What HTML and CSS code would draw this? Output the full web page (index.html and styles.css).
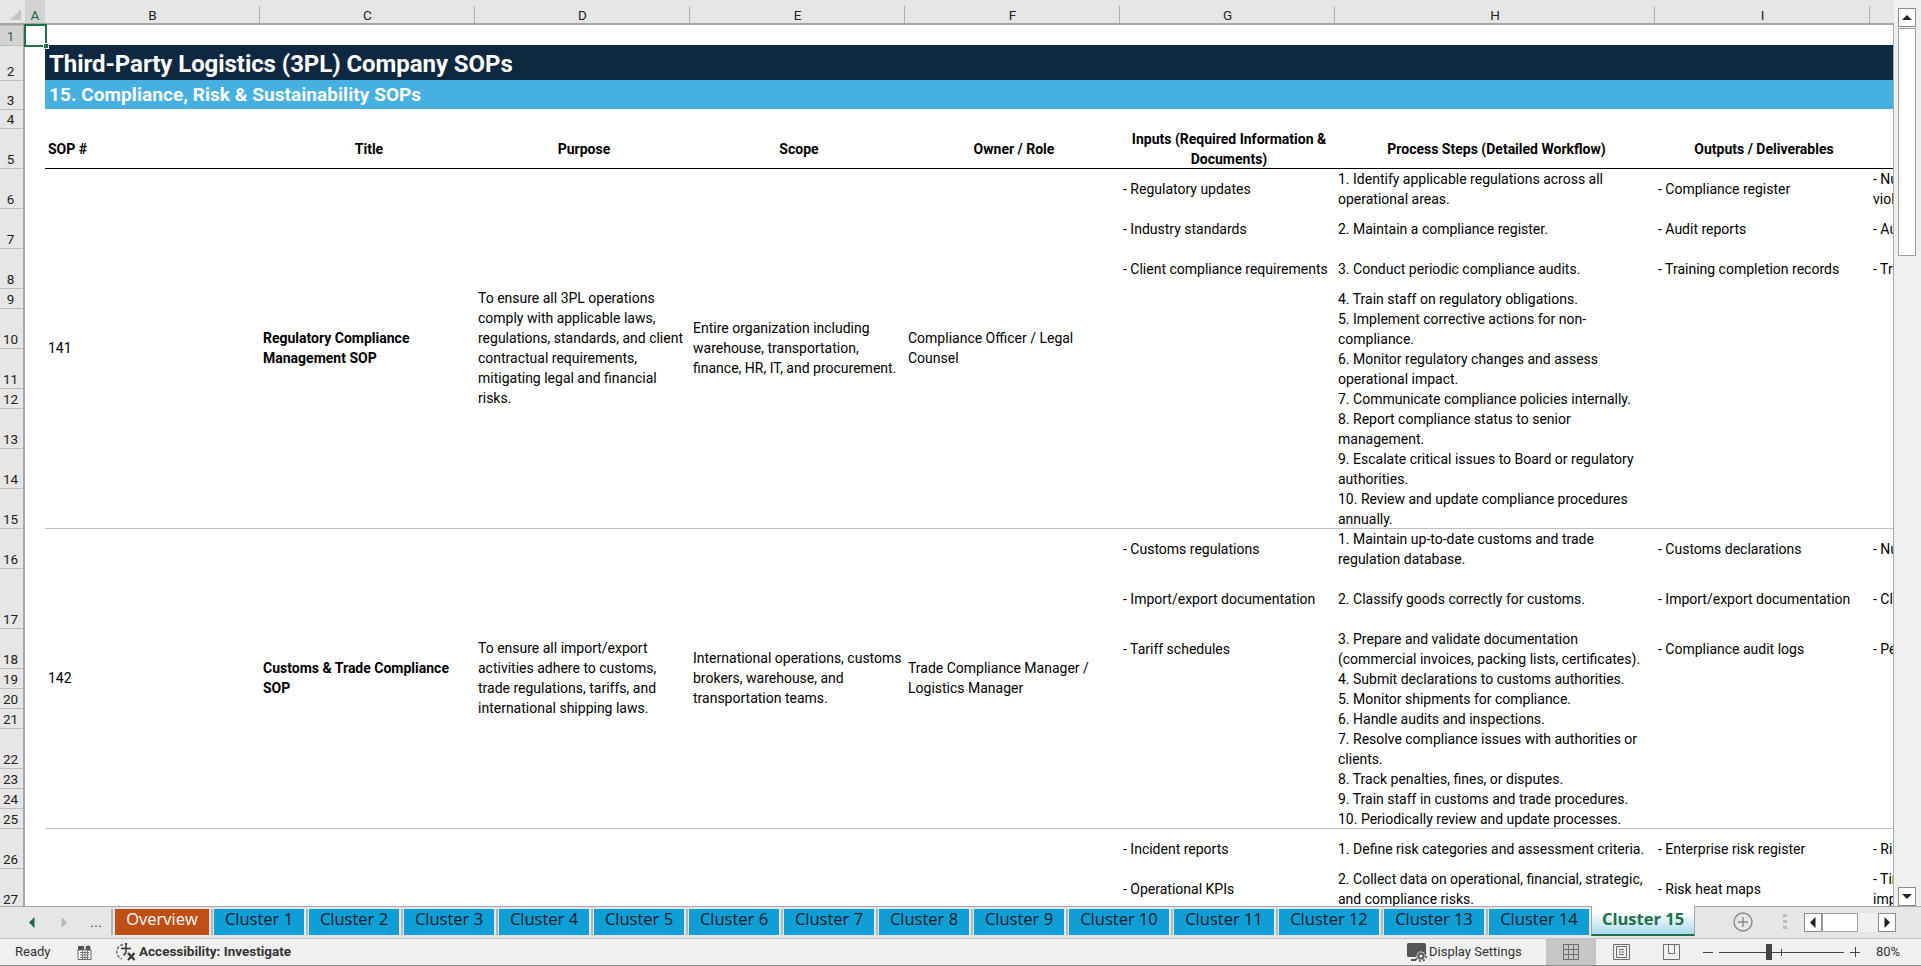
FILE: index.html
```html
<!DOCTYPE html>
<html lang="en">
<head>
<meta charset="utf-8">
<title>Third-Party Logistics (3PL) Company SOPs</title>
<link rel="stylesheet" href="styles.css">
</head>
<body>
<div class="window">
  <div class="sheet-area">
    <div class="grid-wrap">
      <table class="grid">
        <colgroup>
          <col class="c-rh"><col class="c-a"><col class="c-std"><col class="c-std"><col class="c-std"><col class="c-std"><col class="c-std"><col class="c-std"><col class="c-h"><col class="c-std"><col class="c-std">
        </colgroup>
        <thead>
          <tr class="r25">
            <th class="corner"><svg class="corner-tri" width="13" height="13" viewBox="0 0 13 13"><path d="M12 1V12H1Z" fill="#c4c4c4"/></svg></th>
            <th class="ch ch-on">A</th><th class="ch">B</th><th class="ch">C</th><th class="ch">D</th><th class="ch">E</th><th class="ch">F</th><th class="ch">G</th><th class="ch">H</th><th class="ch">I</th><th class="ch"></th>
          </tr>
        </thead>
        <tbody>
          <tr class="r20"><th class="rh rh-on">1</th><td class="a1"><span class="sel"><i class="sel-handle"></i></span></td><td colspan="9"></td></tr>
          <tr class="r35"><th class="rh">2</th><td></td><td colspan="9" class="title">Third-Party Logistics (3PL) Company SOPs</td></tr>
          <tr class="r29"><th class="rh">3</th><td></td><td colspan="9" class="subtitle">15. Compliance, Risk &amp; Sustainability SOPs</td></tr>
          <tr class="r19"><th class="rh">4</th><td></td><td colspan="9"></td></tr>
        </tbody>
        <tbody class="data">
          <tr class="r40 head"><th class="rh">5</th><td></td>
            <td class="hl">SOP #</td><td>Title</td><td>Purpose</td><td>Scope</td><td>Owner / Role</td><td>Inputs (Required Information &amp;<br>Documents)</td><td>Process Steps (Detailed Workflow)</td><td>Outputs / Deliverables</td><td></td>
          </tr>

          <tr class="r40 line-black"><th class="rh">6</th><td></td>
            <td rowspan="10">141</td>
            <td rowspan="10" class="b">Regulatory Compliance<br>Management SOP</td>
            <td rowspan="10">To ensure all 3PL operations<br>comply with applicable laws,<br>regulations, standards, and client<br>contractual requirements,<br>mitigating legal and financial<br>risks.</td>
            <td rowspan="10">Entire organization including<br>warehouse, transportation,<br>finance, HR, IT, and procurement.</td>
            <td rowspan="10">Compliance Officer / Legal<br>Counsel</td>
            <td>- Regulatory updates</td>
            <td>1. Identify applicable regulations across all<br>operational areas.</td>
            <td>- Compliance register</td>
            <td>- Number of compliance<br>violations</td>
          </tr>
          <tr class="r40"><th class="rh">7</th><td></td><td>- Industry standards</td><td>2. Maintain a compliance register.</td><td>- Audit reports</td><td>- Audit findings</td></tr>
          <tr class="r40"><th class="rh">8</th><td></td><td>- Client compliance requirements</td><td>3. Conduct periodic compliance audits.</td><td>- Training completion records</td><td>- Training completion</td></tr>
          <tr class="r20"><th class="rh">9</th><td></td><td></td><td>4. Train staff on regulatory obligations.</td><td></td><td></td></tr>
          <tr class="r40"><th class="rh">10</th><td></td><td></td><td>5. Implement corrective actions for non-<br>compliance.</td><td></td><td></td></tr>
          <tr class="r40"><th class="rh">11</th><td></td><td></td><td>6. Monitor regulatory changes and assess<br>operational impact.</td><td></td><td></td></tr>
          <tr class="r20"><th class="rh">12</th><td></td><td></td><td>7. Communicate compliance policies internally.</td><td></td><td></td></tr>
          <tr class="r40"><th class="rh">13</th><td></td><td></td><td>8. Report compliance status to senior<br>management.</td><td></td><td></td></tr>
          <tr class="r40"><th class="rh">14</th><td></td><td></td><td>9. Escalate critical issues to Board or regulatory<br>authorities.</td><td></td><td></td></tr>
          <tr class="r40"><th class="rh">15</th><td></td><td></td><td>10. Review and update compliance procedures<br>annually.</td><td></td><td></td></tr>

          <tr class="r40 line-grey"><th class="rh">16</th><td></td>
            <td rowspan="10">142</td>
            <td rowspan="10" class="b">Customs &amp; Trade Compliance<br>SOP</td>
            <td rowspan="10">To ensure all import/export<br>activities adhere to customs,<br>trade regulations, tariffs, and<br>international shipping laws.</td>
            <td rowspan="10">International operations, customs<br>brokers, warehouse, and<br>transportation teams.</td>
            <td rowspan="10">Trade Compliance Manager /<br>Logistics Manager</td>
            <td>- Customs regulations</td>
            <td>1. Maintain up-to-date customs and trade<br>regulation database.</td>
            <td>- Customs declarations</td>
            <td>- Number of declarations</td>
          </tr>
          <tr class="r60"><th class="rh">17</th><td></td><td>- Import/export documentation</td><td>2. Classify goods correctly for customs.</td><td>- Import/export documentation</td><td>- Clearance time</td></tr>
          <tr class="r40"><th class="rh">18</th><td></td><td>- Tariff schedules</td><td>3. Prepare and validate documentation<br>(commercial invoices, packing lists, certificates).</td><td>- Compliance audit logs</td><td>- Penalties incurred</td></tr>
          <tr class="r20"><th class="rh">19</th><td></td><td></td><td>4. Submit declarations to customs authorities.</td><td></td><td></td></tr>
          <tr class="r20"><th class="rh">20</th><td></td><td></td><td>5. Monitor shipments for compliance.</td><td></td><td></td></tr>
          <tr class="r20"><th class="rh">21</th><td></td><td></td><td>6. Handle audits and inspections.</td><td></td><td></td></tr>
          <tr class="r40"><th class="rh">22</th><td></td><td></td><td>7. Resolve compliance issues with authorities or<br>clients.</td><td></td><td></td></tr>
          <tr class="r20"><th class="rh">23</th><td></td><td></td><td>8. Track penalties, fines, or disputes.</td><td></td><td></td></tr>
          <tr class="r20"><th class="rh">24</th><td></td><td></td><td>9. Train staff in customs and trade procedures.</td><td></td><td></td></tr>
          <tr class="r20"><th class="rh">25</th><td></td><td></td><td>10. Periodically review and update processes.</td><td></td><td></td></tr>

          <tr class="r40 line-grey"><th class="rh">26</th><td></td>
            <td rowspan="2"></td><td rowspan="2"></td><td rowspan="2"></td><td rowspan="2"></td><td rowspan="2"></td>
            <td>- Incident reports</td><td>1. Define risk categories and assessment criteria.</td><td>- Enterprise risk register</td><td>- Risk exposure</td>
          </tr>
          <tr class="r40"><th class="rh">27</th><td></td><td>- Operational KPIs</td><td>2. Collect data on operational, financial, strategic,<br>and compliance risks.</td><td>- Risk heat maps</td><td>- Time to mitigate<br>impact</td></tr>
        </tbody>
      </table>
    </div>
    <div class="vscroll">
      <div class="vbtn"><svg width="12" height="7" viewBox="0 0 12 7"><path d="M6 1 11 6H1Z" fill="#222"/></svg></div>
      <div class="vthumb"></div>
      <div class="vtrack"></div>
      <div class="vbtn"><svg width="12" height="7" viewBox="0 0 12 7"><path d="M6 6 11 1H1Z" fill="#222"/></svg></div>
    </div>
  </div>

  <div class="tabbar">
    <div class="tabnav">
      <svg class="nav-l" width="6" height="11" viewBox="0 0 6 11"><path d="M5.5 0V11L0 5.5Z" fill="#1f6b3f"/></svg>
      <svg class="nav-r" width="6" height="11" viewBox="0 0 6 11"><path d="M.5 0V11L6 5.5Z" fill="#b9b9b9"/></svg>
      <span class="nav-dots">...</span>
    </div>
    <div class="tabs">
      <span class="tab tab-orange">Overview</span>
      <span class="tab">Cluster 1</span>
      <span class="tab">Cluster 2</span>
      <span class="tab">Cluster 3</span>
      <span class="tab">Cluster 4</span>
      <span class="tab">Cluster 5</span>
      <span class="tab">Cluster 6</span>
      <span class="tab">Cluster 7</span>
      <span class="tab">Cluster 8</span>
      <span class="tab">Cluster 9</span>
      <span class="tab tab-wide">Cluster 10</span>
      <span class="tab tab-wide">Cluster 11</span>
      <span class="tab tab-wide">Cluster 12</span>
      <span class="tab tab-wide">Cluster 13</span>
      <span class="tab tab-wide tab-last">Cluster 14</span>
      <span class="tab-active">Cluster 15</span>
    </div>
    <div class="tab-tools">
      <svg class="add" width="20" height="20" viewBox="0 0 20 20"><circle cx="10" cy="10" r="9" fill="none" stroke="#8a8a8a" stroke-width="1.4"/><path d="M10 5v10M5 10h10" stroke="#8a8a8a" stroke-width="1.4"/></svg>
      <svg class="vdots" width="4" height="16" viewBox="0 0 4 16"><path d="M0 0h4v3H0zM0 6h4v3H0zM0 12h4v3H0z" fill="#bdbdbd"/></svg>
      <div class="hscroll">
        <div class="hbtn"><svg width="6" height="11" viewBox="0 0 6 11"><path d="M5.5 0V11L0 5.5Z" fill="#222"/></svg></div>
        <div class="hthumb"></div>
        <div class="htrack"></div>
        <div class="hbtn"><svg width="6" height="11" viewBox="0 0 6 11"><path d="M.5 0V11L6 5.5Z" fill="#222"/></svg></div>
      </div>
    </div>
  </div>

  <div class="statusbar">
    <span class="ready">Ready</span>
    <svg class="st-macro" width="15" height="15" viewBox="0 0 15 15"><path d="M1 5h13v9.500H1z" fill="#fff" stroke="#666"/><path d="M1 1h6v4H1z" fill="#555"/><circle cx="11" cy="3" r="2.500" fill="#555"/><path d="M3 7.500h9M3 10h9M3 12.500h9M5.500 6v8M8 6v8M10.500 6v8" stroke="#777" stroke-width="1"/></svg>
    <svg class="st-acc" width="20" height="20" viewBox="0 0 20 20"><path d="M7 2.500A7.500 7.500 0 0 0 6 17" fill="none" stroke="#666" stroke-width="1.400" stroke-dasharray="3 1.500"/><path d="M10 1v2.500" stroke="#333" stroke-width="2"/><path d="M5 6.500h10M10 4v6.500M10 10.500l-2.500 3" stroke="#333" stroke-width="1.500" fill="none"/><path d="M12 11l6.500 7M18.500 11l-6.500 7" stroke="#333" stroke-width="2.200"/></svg>
    <span class="acc-text">Accessibility: Investigate</span>
    <div class="st-right">
      <svg class="st-disp" width="20" height="20" viewBox="0 0 20 20"><rect x="0" y="1" width="19" height="14" rx="1.500" fill="#555"/><path d="M4 17h5v2H4z" fill="#555"/><circle cx="14" cy="14" r="4.200" fill="#555" stroke="#f0f0f0" stroke-width="1"/><circle cx="14" cy="14" r="5.200" fill="none" stroke="#555" stroke-width="1.600" stroke-dasharray="2 2"/><circle cx="14" cy="14" r="1.600" fill="#f0f0f0"/></svg>
      <span class="disp-text">Display Settings</span>
      <div class="view view-on"><svg width="16" height="16" viewBox="0 0 16 16"><path d="M.5.500h15v15H.500zM5.500.500v15M10.500.500v15M.5 5.500h15M.5 10.500h15" fill="none" stroke="#6e6e6e"/></svg></div>
      <div class="view"><svg width="17" height="16" viewBox="0 0 17 16"><path d="M.5.500h16v15H.500z" fill="none" stroke="#6e6e6e"/><path d="M3.500 2.500h10v11h-10zM6 5.500h5M6 8h5M6 10.500h5" fill="none" stroke="#6e6e6e"/></svg></div>
      <div class="view"><svg width="17" height="16" viewBox="0 0 17 16"><path d="M.5.500h16v15H.500zM5.500.500v9h6v-9" fill="none" stroke="#6e6e6e"/></svg></div>
      <div class="zoom">
        <span class="z-minus"></span>
        <div class="z-slider"><i class="z-tick"></i><i class="z-thumb"></i></div>
        <span class="z-plus"></span>
      </div>
      <span class="z-pct">80%</span>
    </div>
  </div>
</div>
</body>
</html>
```

FILE: styles.css
```css
* { box-sizing: border-box; }
html, body { margin: 0; padding: 0; height: 100%; overflow: hidden; background: #fff; }
body { font-family: Roboto, "Liberation Sans", sans-serif; color: #000; }

.window { width: 1921px; height: 966px; display: flex; flex-direction: column; overflow: hidden; }

/* ---------- sheet ---------- */
.sheet-area { display: flex; height: 906px; flex: none; }
.grid-wrap { position: relative; width: 1894px; height: 906px; overflow: hidden; flex: none; }
.grid-wrap::after { content: ""; position: absolute; right: 0; top: 25px; bottom: 0; width: 1px; background: #a8a8a8; }
.grid { border-collapse: separate; border-spacing: 0; table-layout: fixed; width: 2085px; font-size: 14px; line-height: 20px; }
.c-rh { width: 25px; }
.c-a { width: 20px; }
.c-std { width: 215px; }
.c-h { width: 320px; }

.r19 { height: 19px; } .r20 { height: 20px; } .r25 { height: 25px; } .r29 { height: 29px; }
.r35 { height: 35px; } .r40 { height: 40px; } .r60 { height: 60px; }

.grid td { padding: 0 0 0 3px; vertical-align: middle; white-space: nowrap; overflow: hidden; }
.data td:not([rowspan]):not(:first-of-type) { transform: translateY(1px); }

.corner { background: #e6e6e6; padding: 0; position: relative; box-shadow: inset 0 -2px 0 #a6a6a6; }
.corner-tri { position: absolute; right: 3px; bottom: 4px; }
.ch {
  background: #e6e6e6 linear-gradient(#b0b0b0, #b0b0b0) no-repeat right 6px / 1px 19px;
  padding: 6px 0 0; font-weight: 400; font-size: 13.500px; line-height: 17px; color: #222;
  box-shadow: inset 0 -2px 0 #a6a6a6;
}
.ch-on { background: #d2d2d2; color: #1f6b3f; }
.rh {
  background: #e6e6e6; padding: 0 4px 0 0; font-weight: 400; font-size: 13.500px; line-height: 17px; color: #222;
  text-align: center; vertical-align: bottom; box-shadow: inset -2px 0 0 #a6a6a6, inset 0 1px 0 #bdbdbd;
}
.rh-on { background: #d2d2d2; color: #1f6b3f; }

.a1 { position: relative; overflow: visible !important; }
.sel { position: absolute; left: -1px; top: -1px; width: 23px; height: 23px; border: 2px solid #1f7145; }
.sel-handle { position: absolute; right: -4px; bottom: -4px; width: 6px; height: 6px; background: #1f7145; border: 1px solid #fff; }

.grid .title { background: #0e2841; color: #fff; font-size: 24px; font-weight: 700; letter-spacing: -0.060px; padding: 2px 0 0 4px; line-height: 30px; }
.grid .subtitle { background: #45b0e1; color: #fff; font-size: 19px; font-weight: 700; letter-spacing: 0.060px; padding-left: 4px; line-height: 24px; }

.head td { font-weight: 700; text-align: center; }
.head .hl { text-align: left; }
.b { font-weight: 700; }

.line-black td[rowspan] { box-shadow: inset 0 1px 0 #000; }
.line-black td:not([rowspan]):not(:first-of-type) { box-shadow: 0 -1px 0 #000; }
.line-grey td[rowspan] { box-shadow: inset 0 1px 0 #bfbfbf; }
.line-grey td:not([rowspan]):not(:first-of-type) { box-shadow: 0 -1px 0 #bfbfbf; }

/* ---------- vertical scrollbar ---------- */
.vscroll { flex: 1; background: #f0f0f0; display: flex; flex-direction: column; padding: 8px 5px 0 4px; }
.vbtn { height: 19px; flex: none; background: #fff; border: 1px solid #8c8c8c; display: flex; align-items: center; justify-content: center; }
.vthumb { height: 228px; flex: none; margin-top: 1px; background: #fff; border: 1px solid #a0a0a0; }
.vtrack { flex: 1; }

/* ---------- sheet tabs ---------- */
.tabbar { display: flex; height: 33px; flex: none; background: #e6e6e6; border-top: 1px solid #a6a6a6; border-bottom: 1px solid #c4c4c4; padding-top: 2px; }
.tabnav { width: 115px; flex: none; display: flex; align-items: center; height: 26px; position: relative; }
.nav-l { margin-left: 29px; }
.nav-r { margin-left: 26px; }
.nav-dots { margin-left: 23px; font-size: 15px; color: #1f6b3f; line-height: 26px; border-right: 2px solid #b5b5b5; padding-right: 9px; }
.tabs { display: flex; height: 26px; flex: none; font-family: "Open Sans", sans-serif; font-size: 16.500px; }
.tab { position: relative; width: 90px; margin-right: 5px; background: #0f9ed5; color: #0b1b25; text-align: center; line-height: 20px; white-space: nowrap; }
.tab::after { content: ""; position: absolute; right: -4px; top: 0; bottom: 0; width: 2px; background: #b5b5b5; }
.tab-orange { width: 94px; background: #c04f15; color: #fff; }
.tab-wide { width: 100px; }
.tab-last { margin-right: 2px; }
.tab-last::after { display: none; }
.tab-active {
  width: 104px; height: 30px; margin-top: -3px; padding-top: 3px; text-align: center; line-height: 20px;
  font-weight: 700; color: #1f7145; white-space: nowrap;
  background: linear-gradient(#fff 20%, #a9d9ee);
  border: 1px solid #a6a6a6; border-top: 0; border-bottom: 2px solid #1f7145;
}
.tab-tools { display: flex; align-items: center; height: 26px; margin-left: 38px; }
.vdots { margin-left: 30px; }
.hscroll { display: flex; margin-left: 17px; height: 19px; width: 92px; }
.hbtn { width: 18px; flex: none; background: #fff; border: 1px solid #8c8c8c; display: flex; align-items: center; justify-content: center; }
.hthumb { width: 36px; flex: none; background: #fff; border: 1px solid #a0a0a0; }
.htrack { flex: 1; background: #f0f0f0; }

/* ---------- status bar ---------- */
.statusbar { display: flex; align-items: center; flex: 1; background: #f0f0f0; border-bottom: 1px solid #8c8c8c; font-size: 13px; color: #333; }
.ready { margin-left: 15px; width: 35px; padding-bottom: 2px; }
.st-macro { margin-left: 27px; }
.st-acc { margin-left: 24px; }
.acc-text { margin-left: 3px; font-weight: 700; font-size: 13.500px; padding-bottom: 2px; }
.st-right { margin-left: auto; display: flex; align-items: center; height: 100%; padding-right: 21px; }
.disp-text { margin-left: 2px; width: 117px; padding-bottom: 2px; }
.view { width: 50px; height: 100%; display: flex; align-items: center; justify-content: center; }
.view-on { background: #c6c6c6; }
.zoom { display: flex; align-items: center; margin-left: 7px; }
.z-minus { width: 10px; height: 1px; background: #444; }
.z-plus { position: relative; width: 10px; height: 1px; background: #444; }
.z-plus::after { content: ""; position: absolute; left: 4.500px; top: -4.500px; width: 1px; height: 10px; background: #444; }
.z-slider { position: relative; width: 125px; height: 1px; background: #444; margin: 0 6px; }
.z-tick { position: absolute; left: 62px; top: -3px; width: 1px; height: 7px; background: #444; }
.z-thumb { position: absolute; left: 47px; top: -8px; width: 6px; height: 16px; background: #444; }
.z-pct { margin-left: 16px; width: 24px; padding-bottom: 2px; }
```
